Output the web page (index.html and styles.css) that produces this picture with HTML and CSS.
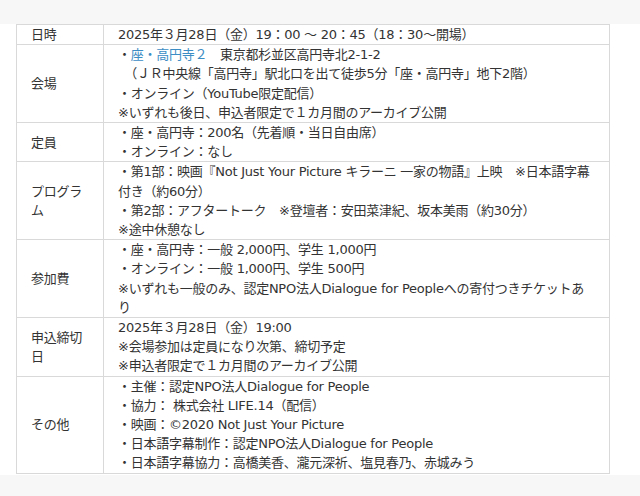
FILE: index.html
```html
<!DOCTYPE html>
<html lang="ja">
<head>
<meta charset="utf-8">
<title>イベント概要</title>
<link rel="stylesheet" href="styles.css">
</head>
<body>
<div class="topbar"></div>
<main class="content">
  <table class="info">
    <tr>
      <th>日時</th>
      <td>2025年３月28日（金）19：00 ～ 20：45（18：30～開場）</td>
    </tr>
    <tr class="venue">
      <th>会場</th>
      <td>・<a class="link" href="#">座・高円寺２</a>　東京都杉並区高円寺北2-1-2<br>　（ＪＲ中央線「高円寺」駅北口を出て徒歩5分「座・高円寺」地下2階）<br>・オンライン（YouTube限定配信）<br>※いずれも後日、申込者限定で１カ月間のアーカイブ公開</td>
    </tr>
    <tr>
      <th>定員</th>
      <td>・座・高円寺：200名（先着順・当日自由席）<br>・オンライン：なし</td>
    </tr>
    <tr>
      <th>プログラム</th>
      <td>・第1部：映画『Not Just Your Picture キラーニ 一家の物語』上映　※日本語字幕付き（約60分）<br>・第2部：アフタートーク　※登壇者：安田菜津紀、坂本美雨（約30分）<br>※途中休憩なし</td>
    </tr>
    <tr>
      <th>参加費</th>
      <td>・座・高円寺：一般 2,000円、学生 1,000円<br>・オンライン：一般 1,000円、学生 500円<br>※いずれも一般のみ、認定NPO法人Dialogue for Peopleへの寄付つきチケットあり</td>
    </tr>
    <tr>
      <th>申込締切日</th>
      <td>2025年３月28日（金）19:00<br>※会場参加は定員になり次第、締切予定<br>※申込者限定で１カ月間のアーカイブ公開</td>
    </tr>
    <tr>
      <th>その他</th>
      <td>・主催：認定NPO法人Dialogue for People<br>・協力： 株式会社 LIFE.14（配信）<br>・映画：©2020 Not Just Your Picture<br>・日本語字幕制作：認定NPO法人Dialogue for People<br>・日本語字幕協力：高橋美香、瀧元深祈、塩見春乃、赤城みう</td>
    </tr>
  </table>
</main>
</body>
</html>
```

FILE: styles.css
```css
html, body {
  margin: 0;
  padding: 0;
}
body {
  background: #f7f7f7;
  font-family: "DejaVu Sans", "Noto Sans CJK JP", sans-serif;
  font-size: 13px;
  color: #333;
  height: 496px;
  overflow: hidden;
}
.topbar {
  height: 24px;
  background: #f7f7f7;
}
.content {
  background: #fff;
  padding: 0 30px 1px 16px;
}
.info {
  width: 594px;
  border-collapse: collapse;
  line-height: 19.2px;
  letter-spacing: -0.25px;
}
.info th,
.info td {
  border: 1px solid #d9d9d9;
  text-align: left;
  font-weight: normal;
}
.info th {
  width: 58px;
  padding: 0 14px;
  vertical-align: middle;
}
.info td {
  padding: 0 16px 0 14px;
  vertical-align: top;
}
.link {
  color: #3c8dc4;
  text-decoration: none;
}
```
